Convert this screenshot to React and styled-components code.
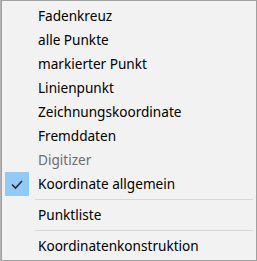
import React from 'react';
import styled, { createGlobalStyle } from 'styled-components';

const GlobalStyle = createGlobalStyle`
  html, body {
    margin: 0;
    padding: 0;
    background: #c8c8c8;
  }
`;

const Screen = styled.div`
  width: 257px;
  height: 261px;
  padding-left: 1px;
  box-sizing: border-box;
  background: #b4b4b4;
`;

const Menu = styled.div`
  display: flex;
  flex-direction: column;
  width: 256px;
  height: 261px;
  box-sizing: border-box;
  padding: 3px 2px 2px 2px;
  border: 1px solid #a0a0a0;
  background: #f2f2f2;
  font-family: "Noto Sans", "Open Sans", sans-serif;
  font-size: 13.6px;
  color: #000;
`;

const Item = styled.div`
  display: flex;
  align-items: center;
  height: 24px;
  color: ${props => (props.disabled ? '#6d6d6d' : '#000')};
`;

const Gutter = styled.div`
  display: flex;
  align-items: center;
  justify-content: center;
  width: 24px;
  height: 24px;
  margin-left: 1px;
  margin-right: 9px;
  background: ${props => (props.checked ? '#91c9f7' : 'transparent')};
`;

const Label = styled.span`
  white-space: nowrap;
  line-height: 24px;
`;

const Separator = styled.div`
  height: 1px;
  margin: 3px 1px 3px 31px;
  background: #d7d7d7;
`;

const Check = () => (
  <svg width="14" height="12" viewBox="0 0 14 12">
    <polyline points="2,6.5 5.5,10 12,3" fill="none" stroke="#2b2b2b" strokeWidth="1.6" />
  </svg>
);

const items = [
  { label: 'Fadenkreuz' },
  { label: 'alle Punkte' },
  { label: 'markierter Punkt' },
  { label: 'Linienpunkt' },
  { label: 'Zeichnungskoordinate' },
  { label: 'Fremddaten' },
  { label: 'Digitizer', disabled: true },
  { label: 'Koordinate allgemein', checked: true },
  { separator: true },
  { label: 'Punktliste' },
  { separator: true },
  { label: 'Koordinatenkonstruktion' },
];

const App = () => (
  <>
    <GlobalStyle />
    <Screen>
      <Menu>
        {items.map((item, i) =>
          item.separator ? (
            <Separator key={i} />
          ) : (
            <Item key={i} disabled={item.disabled}>
              <Gutter checked={item.checked}>{item.checked && <Check />}</Gutter>
              <Label>{item.label}</Label>
            </Item>
          )
        )}
      </Menu>
    </Screen>
  </>
);

export default App;
